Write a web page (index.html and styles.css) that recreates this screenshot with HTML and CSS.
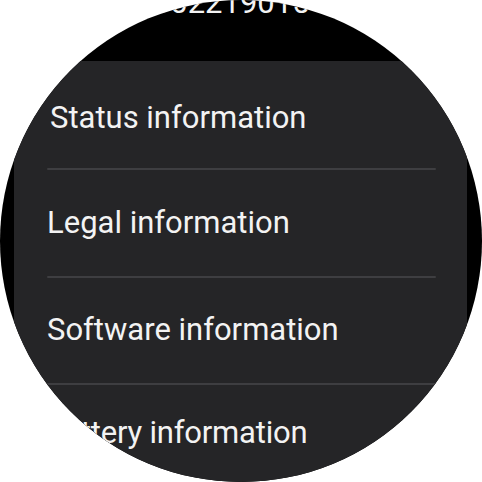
FILE: index.html
```html
<!DOCTYPE html>
<html>
<head>
<meta charset="utf-8">
<link rel="stylesheet" href="styles.css">
</head>
<body>
<div class="watch">
  <div class="header">
    <div class="serial">R3CW02219015</div>
  </div>
  <div class="panel">
    <div class="row first"><span class="label status">Status information</span></div>
    <div class="divider"></div>
    <div class="row"><span class="label">Legal information</span></div>
    <div class="divider"></div>
    <div class="row"><span class="label">Software information</span></div>
    <div class="divider"></div>
    <div class="row"><span class="label battery">Battery information</span></div>
  </div>
</div>
</body>
</html>
```

FILE: styles.css
```css
html, body {
  margin: 0;
  padding: 0;
  background: #ffffff;
}
.watch {
  width: 482px;
  height: 482px;
  border-radius: 50%;
  overflow: hidden;
  background: #000000;
  font-family: Roboto, "Noto Sans", sans-serif;
  color: #f3f3f3;
}
.header {
  height: 61px;
  overflow: hidden;
}
.serial {
  font-size: 31px;
  line-height: 36px;
  margin-top: -15px;
  padding-left: 86px;
  white-space: nowrap;
}
.panel {
  margin: 0 15px 0 14px;
  background: #252527;
  height: 460px;
}
.row {
  height: 105.5px;
  display: flex;
  align-items: center;
  padding-left: 33px;
}
.row.first {
  height: 107px;
}
.label {
  font-size: 31px;
  line-height: 36px;
  white-space: nowrap;
}
.status {
  margin-left: 3px;
  margin-top: 6px;
}
.battery {
  margin-top: -10px;
  margin-left: -2px;
  letter-spacing: -0.2px;
}
.divider {
  height: 2px;
  margin: 0 31px 0 33px;
  border-radius: 1px;
  background: #3e3e41;
}
```
